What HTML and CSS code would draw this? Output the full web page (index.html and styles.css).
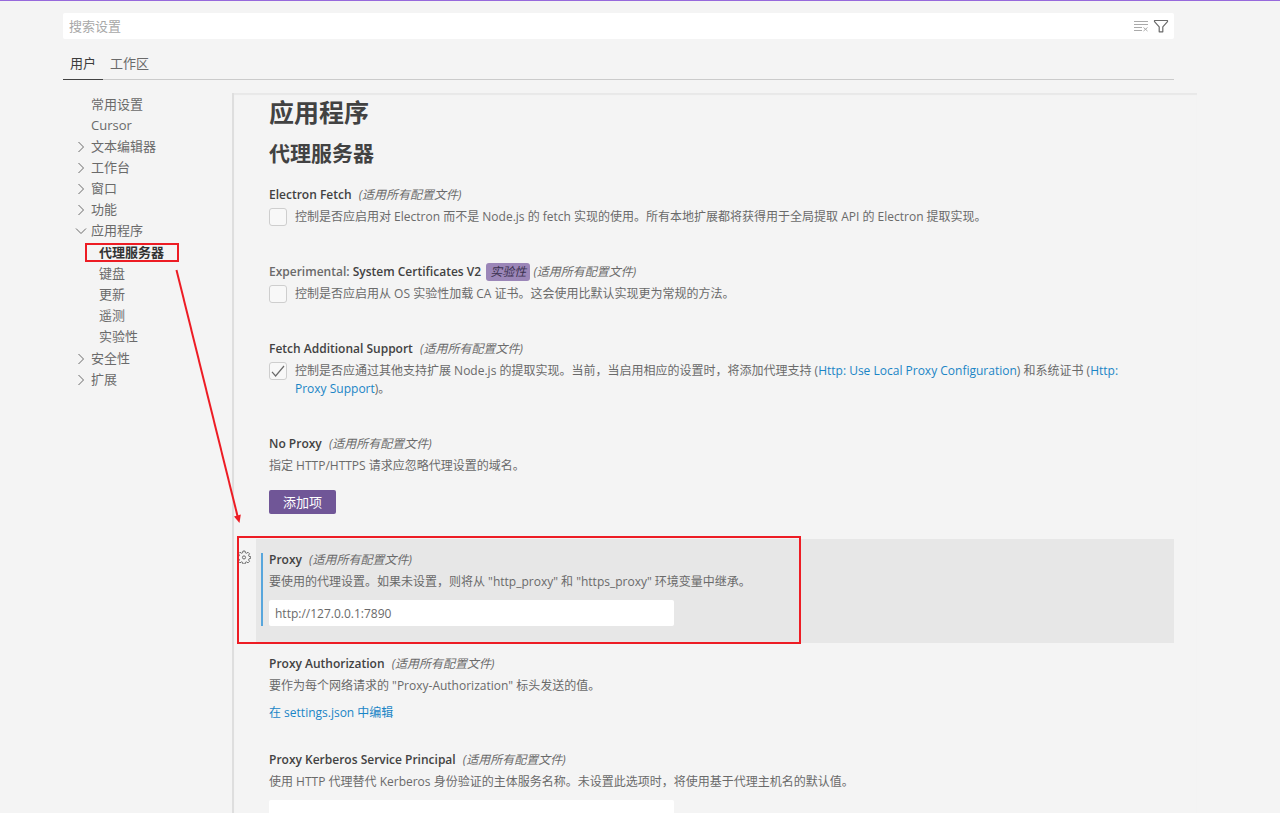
FILE: index.html
```
<!DOCTYPE html>
<html lang="zh-CN">
<head>
<meta charset="utf-8">
<meta name="viewport" content="width=device-width, initial-scale=1">
<title>设置</title>
<link rel="stylesheet" href="styles.css">
</head>
<body>
<svg class="symbols" aria-hidden="true">
  <symbol id="chevron" viewBox="0 0 12 12"><path d="M3.5 1 8.5 6 3.5 11" fill="none" stroke="currentColor"/></symbol>
</svg>
<div class="settings">
  <header class="header">
    <div class="search">
      <input class="search-input" type="text" placeholder="搜索设置" aria-label="搜索设置">
      <button class="icon-button muted" type="button" aria-label="清除搜索">
        <svg width="16" height="16" viewBox="0 0 16 16" fill="none" stroke="currentColor"><path d="M1 3.5h14M1 6.5h14M1 9.5h8M1 12.5h8M10.5 9.5l4 3.5M14.5 9.5l-4 3.5"/></svg>
      </button>
      <button class="icon-button" type="button" aria-label="筛选设置">
        <svg width="16" height="16" viewBox="0 0 16 16" fill="none" stroke="currentColor" stroke-width="1.2" stroke-linejoin="round"><path d="M1.5 2.5h13v1.2L9.8 8.8v5H6.2v-5L1.5 3.7z"/></svg>
      </button>
    </div>
    <div class="tabs" role="tablist">
      <button class="tab active" type="button" role="tab" aria-selected="true">用户</button>
      <button class="tab" type="button" role="tab" aria-selected="false">工作区</button>
    </div>
  </header>
  <div class="body">
    <nav class="toc" aria-label="设置目录">
      <ul class="toc-list">
        <li><a class="toc-link" href="#common"><span class="twist"></span>常用设置</a></li>
        <li><a class="toc-link" href="#cursor"><span class="twist"></span>Cursor</a></li>
        <li><a class="toc-link" href="#editor"><svg class="twist"><use href="#chevron"/></svg>文本编辑器</a></li>
        <li><a class="toc-link" href="#workbench"><svg class="twist"><use href="#chevron"/></svg>工作台</a></li>
        <li><a class="toc-link" href="#window"><svg class="twist"><use href="#chevron"/></svg>窗口</a></li>
        <li><a class="toc-link" href="#features"><svg class="twist"><use href="#chevron"/></svg>功能</a></li>
        <li><a class="toc-link" href="#application"><svg class="twist open"><use href="#chevron"/></svg>应用程序</a>
          <ul class="toc-list toc-sub">
            <li><a class="toc-link selected" href="#proxy-group">代理服务器</a></li>
            <li><a class="toc-link" href="#keyboard">键盘</a></li>
            <li><a class="toc-link" href="#update">更新</a></li>
            <li><a class="toc-link" href="#telemetry">遥测</a></li>
            <li><a class="toc-link" href="#experimental">实验性</a></li>
          </ul>
        </li>
        <li><a class="toc-link" href="#security"><svg class="twist"><use href="#chevron"/></svg>安全性</a></li>
        <li><a class="toc-link" href="#extensions"><svg class="twist"><use href="#chevron"/></svg>扩展</a></li>
      </ul>
    </nav>
    <main class="content">
      <h1 class="group-title" id="application">应用程序</h1>
      <h2 class="sub-title" id="proxy-group">代理服务器</h2>

      <section class="item">
        <h3 class="item-title">Electron Fetch <em class="scope">(适用所有配置文件)</em></h3>
        <div class="check-row">
          <span class="check"><input class="check-box" type="checkbox" id="electron-fetch"></span>
          <label class="description" for="electron-fetch">控制是否应启用对 Electron 而不是 Node.js 的 fetch 实现的使用。所有本地扩展都将获得用于全局提取 API 的 Electron 提取实现。</label>
        </div>
      </section>

      <section class="item">
        <h3 class="item-title"><span class="category">Experimental:</span> System Certificates V2 <em class="badge">实验性</em> <em class="scope-near">(适用所有配置文件)</em></h3>
        <div class="check-row">
          <span class="check"><input class="check-box" type="checkbox" id="system-certs"></span>
          <label class="description" for="system-certs">控制是否应启用从 OS 实验性加载 CA 证书。这会使用比默认实现更为常规的方法。</label>
        </div>
      </section>

      <section class="item">
        <h3 class="item-title">Fetch Additional Support <em class="scope">(适用所有配置文件)</em></h3>
        <div class="check-row">
          <span class="check"><input class="check-box" type="checkbox" id="fetch-support" checked><svg class="check-mark" viewBox="0 0 18 18"><path d="M3 9.8 6.6 14 15 4" fill="none" stroke="currentColor" stroke-width="1.2"/></svg></span>
          <label class="description" for="fetch-support">控制是否应通过其他支持扩展 Node.js 的提取实现。当前，当启用相应的设置时，将添加代理支持 (<a href="#local-proxy">Http: Use Local Proxy Configuration</a>) 和系统证书 (<a href="#proxy-support">Http: Proxy Support</a>)。</label>
        </div>
      </section>

      <section class="item">
        <h3 class="item-title">No Proxy <em class="scope">(适用所有配置文件)</em></h3>
        <p class="description">指定 HTTP/HTTPS 请求应忽略代理设置的域名。</p>
        <button class="add-button" type="button">添加项</button>
      </section>

      <section class="item compact focused">
        <button class="gear" type="button" aria-label="更多操作">
          <svg width="14" height="14" viewBox="0 0 16 16" fill="none" stroke="currentColor" stroke-linejoin="round"><path d="M6.8 1.2h2.4l.4 2 1.3.5 1.7-1.1 1.7 1.7-1.1 1.7.5 1.2 2 .4v1.9l-2 .6-.5 1.2 1.1 1.7-1.7 1.7-1.7-1.1-1.3.5-.4 2H6.8l-.4-2-1.3-.5-1.7 1.1L1.7 13l1.1-1.7-.5-1.2-1.7-.6V7.6l1.7-.4.5-1.2-1.1-1.7 1.7-1.7 1.7 1.1 1.3-.5z"/><circle cx="8" cy="8.5" r="1.8"/></svg>
        </button>
        <h3 class="item-title">Proxy <em class="scope">(适用所有配置文件)</em></h3>
        <label class="description" for="proxy">要使用的代理设置。如果未设置，则将从 "http_proxy" 和 "https_proxy" 环境变量中继承。</label>
        <input class="text-input" type="text" id="proxy" value="http://127.0.0.1:7890">
      </section>

      <section class="item compact">
        <h3 class="item-title">Proxy Authorization <em class="scope">(适用所有配置文件)</em></h3>
        <p class="description">要作为每个网络请求的 "Proxy-Authorization" 标头发送的值。</p>
        <a class="json-link" href="#settings-json">在 settings.json 中编辑</a>
      </section>

      <section class="item compact">
        <h3 class="item-title">Proxy Kerberos Service Principal <em class="scope">(适用所有配置文件)</em></h3>
        <label class="description" for="kerberos">使用 HTTP 代理替代 Kerberos 身份验证的主体服务名称。未设置此选项时，将使用基于代理主机名的默认值。</label>
        <input class="text-input" type="text" id="kerberos">
      </section>
    </main>
  </div>
</div>
<svg class="annotations" width="1280" height="813" viewBox="0 0 1280 813" fill="none" stroke="#ed1c24" stroke-width="2" aria-hidden="true">
  <rect x="86" y="244" width="92" height="17"/>
  <rect x="238" y="537" width="562" height="106"/>
  <path d="M176.5 270 237.5 516"/>
  <path d="M234 516.5 240.8 514.5 239.5 523z" fill="#ed1c24" stroke="none"/>
</svg>
</body>
</html>
```
FILE: styles.css
```
* {
  box-sizing: border-box;
}

body {
  margin: 0;
  height: 100vh;
  overflow: hidden;
  position: relative;
  background: #f4f4f4;
  color: #6a6a6a;
  border-top: 1px solid #9769dc;
  font-family: "Open Sans", "Noto Sans CJK SC", sans-serif;
  font-size: 12px;
  line-height: 18px;
}

button,
input {
  font: inherit;
  color: inherit;
}

button {
  border: 0;
  padding: 0;
  background: none;
}

a {
  color: #1a85c6;
  text-decoration: none;
}

.symbols {
  display: none;
}

.settings {
  height: 100%;
  display: flex;
  flex-direction: column;
  padding: 12px 83px 0 63px;
}

.header {
  margin-right: 23px;
}

.search {
  display: flex;
  align-items: center;
  gap: 4px;
  height: 26px;
  padding-right: 5px;
  background: #fff;
  border-radius: 2px;
}

.search-input {
  flex: 1;
  min-width: 0;
  border: 0;
  padding: 0 6px;
  background: none;
  outline: 0;
  font-size: 13px;
}

.search-input::placeholder {
  color: #a8a8a8;
}

.icon-button {
  display: flex;
  color: #6a6a6a;
}

.icon-button.muted {
  color: #aaa;
}

.tabs {
  display: flex;
  margin-top: 9px;
  border-bottom: 1px solid #cbcbcb;
}

.tab {
  height: 32px;
  padding: 0 7px 2px;
  margin-bottom: -1px;
  border-bottom: 1px solid transparent;
  font-size: 13px;
}

.tab.active {
  color: #3c3c3c;
  border-bottom-color: #424242;
}

.body {
  flex: 1;
  min-height: 0;
  display: flex;
  margin-top: 13px;
}

.toc {
  flex: 0 0 169px;
  padding-top: 1px;
  font-size: 13px;
}

.toc-list {
  list-style: none;
  margin: 0;
  padding: 0;
}

.toc-sub {
  padding: 1px 0 1px 24px;
}

.toc-link {
  display: flex;
  align-items: center;
  gap: 4px;
  padding-left: 12px;
  line-height: 21px;
  color: #6a6a6a;
}

.toc-link.selected {
  color: #333;
  font-weight: 600;
}

.twist {
  width: 12px;
  height: 12px;
}

.twist.open {
  transform: rotate(90deg);
}

.content {
  flex: 1;
  min-width: 0;
  overflow: hidden;
  padding: 0 23px 0 22px;
  border-left: 2px solid #dedede;
  box-shadow: inset 0 2px 1px #e8e8e8;
}

.group-title,
.sub-title {
  margin: 0;
  padding-left: 13px;
  color: #424242;
  font-weight: 700;
}

.group-title {
  font-size: 25px;
  line-height: 39px;
}

.sub-title {
  font-size: 21px;
  line-height: 42px;
}

.item {
  position: relative;
  padding: 12px 13px 25px;
}

.item.compact {
  padding-bottom: 17px;
}

.item.focused {
  background: #e7e7e7;
}

.item.focused::before {
  content: "";
  position: absolute;
  left: 5px;
  top: 14px;
  bottom: 17px;
  width: 2px;
  background: #58a6dc;
}

.gear {
  position: absolute;
  left: -19px;
  top: 11px;
  display: flex;
  color: #5a5a5a;
}

.item-title {
  margin: 0 0 4px;
  color: #424242;
  font-size: 12px;
  font-weight: 600;
  line-height: 18px;
}

.category,
.scope,
.scope-near {
  color: #6a6a6a;
}

.scope,
.scope-near {
  font-weight: 400;
}

.scope {
  margin-left: 4px;
}

.badge {
  display: inline-block;
  margin-left: 2px;
  padding: 0 4px;
  border-radius: 3px;
  background: #9b86b8;
  color: #3c3250;
  font-weight: 400;
  vertical-align: top;
}

.description {
  display: block;
  margin: 0;
}

.check-row {
  display: flex;
  gap: 8px;
  padding-right: 20px;
}

.check {
  flex: none;
  display: grid;
  width: 18px;
  height: 18px;
}

.check-box,
.check-mark {
  grid-area: 1 / 1;
  width: 18px;
  height: 18px;
  margin: 0;
}

.check-box {
  appearance: none;
  border: 1px solid #cecece;
  border-radius: 3px;
  background: #f8f8f8;
}

.check-mark {
  pointer-events: none;
}

.add-button {
  display: block;
  height: 24px;
  margin-top: 15px;
  padding: 0 14px;
  border-radius: 2px;
  background: #705697;
  color: #fff;
  font-size: 13px;
}

.text-input {
  display: block;
  width: 100%;
  max-width: 405px;
  height: 26px;
  margin-top: 9px;
  padding: 0 6px;
  border: 0;
  border-radius: 2px;
  background: #fff;
}

.json-link {
  display: block;
  margin-top: 9px;
}

.annotations {
  position: absolute;
  left: 0;
  top: -1px;
  pointer-events: none;
}
```
